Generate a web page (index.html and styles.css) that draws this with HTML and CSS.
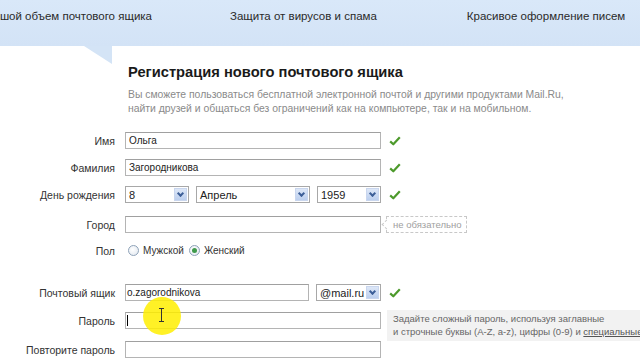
FILE: index.html
```html
<!DOCTYPE html>
<html lang="ru">
<head>
<meta charset="utf-8">
<title>Регистрация</title>
<link rel="stylesheet" href="styles.css">
</head>
<body>
<header class="topbar">
  <nav class="nav">
    <div class="nav-item first"><span>Большой объем почтового ящика</span></div>
    <div class="nav-item second">Защита от вирусов и спама</div>
    <div class="nav-item third">Красивое оформление писем</div>
  </nav>
  <svg class="pointer" width="30" height="20" viewBox="0 0 30 20"><polygon points="0,0 28,0 28,18" fill="#d4e4f6"/></svg>
</header>

<main class="content">
  <h1 class="title">Регистрация нового почтового ящика</h1>
  <p class="desc">Вы сможете пользоваться бесплатной электронной почтой и другими продуктами Mail.Ru,<br>найти друзей и общаться без ограничений как на компьютере, так и на мобильном.</p>

  <form class="form">
    <div class="row r-name">
      <label class="lbl">Имя</label>
      <div class="field"><div class="input w-full">Ольга</div><svg class="check" width="12" height="10" viewBox="0 0 12 10"><path d="M1.2 5.4 L4.3 8.3 L10.8 1.3" fill="none" stroke="#4d9a2c" stroke-width="2.2" stroke-linejoin="round"/></svg></div>
    </div>
    <div class="row r-surname">
      <label class="lbl">Фамилия</label>
      <div class="field"><div class="input w-full">Загородникова</div><svg class="check" width="12" height="10" viewBox="0 0 12 10"><path d="M1.2 5.4 L4.3 8.3 L10.8 1.3" fill="none" stroke="#4d9a2c" stroke-width="2.2" stroke-linejoin="round"/></svg></div>
    </div>
    <div class="row r-birth">
      <label class="lbl">День рождения</label>
      <div class="field">
        <div class="select s-day"><span>8</span><i class="arr"></i></div>
        <div class="select s-month"><span>Апрель</span><i class="arr"></i></div>
        <div class="select s-year"><span>1959</span><i class="arr"></i></div>
        <svg class="check" width="12" height="10" viewBox="0 0 12 10"><path d="M1.2 5.4 L4.3 8.3 L10.8 1.3" fill="none" stroke="#4d9a2c" stroke-width="2.2" stroke-linejoin="round"/></svg>
      </div>
    </div>
    <div class="row r-city">
      <label class="lbl">Город</label>
      <div class="field"><div class="input w-full"></div><span class="hint-opt">не обязательно</span></div>
    </div>
    <div class="row r-sex">
      <label class="lbl">Пол</label>
      <div class="field radios">
        <span class="radio"></span><span class="rlabel">Мужской</span>
        <span class="radio on"></span><span class="rlabel">Женский</span>
      </div>
    </div>
    <div class="row r-mail">
      <label class="lbl">Почтовый ящик</label>
      <div class="field">
        <div class="input w-mail">o.zagorodnikova</div>
        <div class="select s-domain"><span>@mail.ru</span><i class="arr"></i></div>
        <svg class="check" width="12" height="10" viewBox="0 0 12 10"><path d="M1.2 5.4 L4.3 8.3 L10.8 1.3" fill="none" stroke="#4d9a2c" stroke-width="2.2" stroke-linejoin="round"/></svg>
      </div>
    </div>
    <div class="row r-pass">
      <label class="lbl">Пароль</label>
      <div class="field"><div class="input w-full"><i class="caret"></i></div>
        <div class="hint-pass">Задайте сложный пароль, используя заглавные<br>и строчные буквы (A-Z, a-z), цифры (0-9) и <u>специальные символы</u></div>
      </div>
    </div>
    <div class="row r-pass2">
      <label class="lbl">Повторите пароль</label>
      <div class="field"><div class="input w-full"></div></div>
    </div>
  </form>
</main>

<div class="cursor-spot"><span class="ibeam"></span></div>
</body>
</html>
```

FILE: styles.css
```css
html, body {
  margin: 0;
  padding: 0;
  background: #fff;
  width: 640px;
  height: 360px;
  overflow: hidden;
  font-family: "Liberation Sans", Arial, sans-serif;
  color: #333;
  position: relative;
}

.topbar {
  position: relative;
  height: 46px;
  background: linear-gradient(180deg, #d9e8f9 0%, #d3e3f6 100%);
}
.nav {
  display: flex;
  height: 32px;
  align-items: center;
  font-size: 11.5px;
  color: #2a2a2a;
  white-space: nowrap;
}
.nav-item.first {
  width: 152px;
  display: flex;
  justify-content: flex-end;
  overflow: hidden;
}
.nav-item.second { margin-left: 78px; }
.nav-item.third { margin-left: 90px; }
.pointer {
  position: absolute;
  left: 84px;
  top: 46px;
}

.content {
  padding-left: 128px;
}
.title {
  margin: 0;
  padding-top: 17px;
  font-size: 14.7px;
  line-height: 18px;
  font-weight: bold;
  color: #1a1a1a;
}
.desc {
  margin: 7px 0 0;
  font-size: 10.4px;
  line-height: 14px;
  color: #8a8a8a;
}

.form {
  margin-left: -128px;
  margin-top: 16px;
}
.row {
  display: flex;
  align-items: center;
  height: 17px;
  font-size: 10.5px;
}
.lbl {
  width: 115px;
  text-align: right;
  padding-right: 10px;
  color: #333;
  flex-shrink: 0;
}
.field {
  display: flex;
  align-items: center;
  height: 17px;
}
.r-surname { margin-top: 10px; }
.r-birth { margin-top: 10px; }
.r-city { margin-top: 13px; }
.r-sex { margin-top: 9px; }
.r-mail { margin-top: 25px; }
.r-pass { margin-top: 11px; }
.r-pass2 { margin-top: 12px; }

.input {
  box-sizing: border-box;
  height: 17px;
  border: 1px solid #b4b4b4;
  border-top-color: #a0a0a0;
  background: #fff;
  padding: 0 3px;
  line-height: 15px;
  font-size: 10px;
  color: #222;
  position: relative;
}
.w-full { width: 256px; }
.w-mail { width: 184px; padding-left: 1px; }

.caret {
  position: absolute;
  left: 1px;
  top: 2px;
  width: 1px;
  height: 11px;
  background: #000;
}

.check {
  margin-left: 8px;
  display: block;
}

.select {
  box-sizing: border-box;
  height: 17px;
  border: 1px solid #a8a8a8;
  background: #fff;
  display: flex;
  align-items: center;
  justify-content: space-between;
  padding: 0 1px 0 3px;
  color: #222;
  font-size: 11px;
}
.s-day { width: 64px; }
.s-month { width: 114px; margin-left: 7px; }
.s-year { width: 64px; margin-left: 7px; }
.s-domain { width: 65px; margin-left: 7px; }
.arr {
  width: 13px;
  height: 13px;
  background: linear-gradient(180deg, #dde7f7, #bccfee);
  border: 1px solid #c9d6ee;
  box-sizing: border-box;
  position: relative;
}
.arr::after {
  content: "";
  position: absolute;
  left: 3px;
  top: 2px;
  width: 3px;
  height: 3px;
  border-right: 2px solid #3d5f98;
  border-bottom: 2px solid #3d5f98;
  transform: rotate(45deg);
}

.hint-opt {
  position: relative;
  margin-left: 5px;
  height: 17px;
  box-sizing: border-box;
  border: 1px dashed #c8c8c8;
  padding: 0 4px 0 6px;
  line-height: 15px;
  color: #a0a0a0;
  font-size: 9.5px;
  white-space: nowrap;
}
.hint-opt::before {
  content: "";
  position: absolute;
  left: -4px;
  top: 4px;
  width: 6px;
  height: 6px;
  background: #fff;
  border-left: 1px dashed #c8c8c8;
  border-bottom: 1px dashed #c8c8c8;
  transform: rotate(45deg);
}

.radio {
  width: 11px;
  height: 11px;
  box-sizing: border-box;
  border-radius: 50%;
  border: 1px solid #8ea2b8;
  background: radial-gradient(circle at 40% 40%, #fff, #dfe6ee);
  margin-left: 3px;
  position: relative;
}
.radio.on { margin-left: 5px; }
.radio.on::after {
  content: "";
  position: absolute;
  left: 2px;
  top: 2px;
  width: 5px;
  height: 5px;
  border-radius: 50%;
  background: #3f9a4b;
}
.rlabel {
  margin-left: 4px;
  color: #333;
  font-size: 10px;
}

.hint-pass {
  position: relative;
  margin-left: 6px;
  background: #f2f2f2;
  padding: 2px 0 3px 6px;
  width: 260px;
  font-size: 9.5px;
  line-height: 13px;
  color: #666;
  white-space: nowrap;
  overflow: hidden;
  align-self: flex-start;
  margin-top: -2px;
}
.hint-pass u { color: #555; }

.cursor-spot {
  position: absolute;
  left: 143px;
  top: 297px;
  width: 38px;
  height: 38px;
  border-radius: 50%;
  background: rgba(255, 238, 0, 0.85);
}
.ibeam {
  position: absolute;
  left: 18px;
  top: 11px;
  width: 1px;
  height: 14px;
  background: #333;
}
.ibeam::before, .ibeam::after {
  content: "";
  position: absolute;
  left: -2px;
  width: 5px;
  height: 1px;
  background: #333;
}
.ibeam::before { top: 0; }
.ibeam::after { bottom: 0; }
```
